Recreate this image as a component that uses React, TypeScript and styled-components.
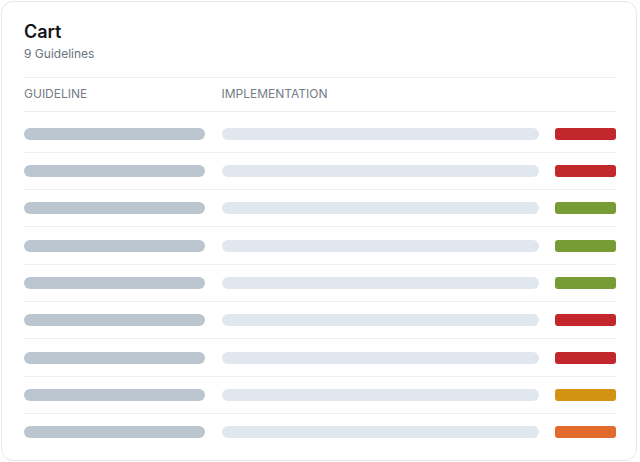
import * as React from 'react';
import styled, {createGlobalStyle} from 'styled-components';

const GlobalStyle = createGlobalStyle`
  html, body {
    margin: 0;
    padding: 0;
    background: #ffffff;
    font-family: Inter, "Noto Sans", "Liberation Sans", sans-serif;
  }
`;

const Page = styled.div`
  padding: 1px;
`;

const Card = styled.div`
  box-sizing: border-box;
  width: 636px;
  height: 460px;
  padding: 17.5px 20px 0 22px;
  border: 1px solid #e3e7ec;
  border-radius: 12px;
  background: #ffffff;
`;

const Title = styled.h1`
  margin: 0;
  font-size: 18px;
  line-height: 24px;
  font-weight: 600;
  color: #111418;
`;

const Subtitle = styled.p`
  margin: 2px 0 15px;
  font-size: 12px;
  line-height: 16px;
  color: #6b7480;
`;

const Grid = styled.div`
  display: grid;
  grid-template-columns: 181px 1fr 61px;
  column-gap: 16.5px;
  align-items: center;
`;

const HeaderRow = styled(Grid)`
  padding: 8.5px 0;
  border-top: 1px solid #eceff2;
  border-bottom: 1px solid #eceff2;
`;

const HeaderCell = styled.span`
  font-size: 12px;
  line-height: 16px;
  color: #747c87;
  text-transform: uppercase;
`;

const Body = styled.div`
  margin-top: 4px;
`;

const Row = styled(Grid)`
  padding: 12.33px 0 12px;
  border-bottom: 1px solid #eef0f3;

  &:last-child {
    border-bottom: none;
  }
`;

const GuidelineBar = styled.div`
  height: 12px;
  border-radius: 6px;
  background: #bcc6d0;
`;

const ImplementationBar = styled.div`
  height: 12px;
  border-radius: 6px;
  background: #e1e7ee;
`;

type Status = 'fail' | 'pass' | 'warn' | 'partial';

const statusColors: Record<Status, string> = {
  fail: '#c1272b',
  pass: '#789c35',
  warn: '#d39212',
  partial: '#e06b2c',
};

const StatusBar = styled.div<{$status: Status}>`
  height: 12px;
  border-radius: 3px;
  background: ${p => statusColors[p.$status]};
`;

const rows: Status[] = ['fail', 'fail', 'pass', 'pass', 'pass', 'fail', 'fail', 'warn', 'partial'];

export default function App() {
  return (
    <Page>
      <GlobalStyle/>
      <Card>
        <Title>Cart</Title>
        <Subtitle>{rows.length} Guidelines</Subtitle>
        <HeaderRow>
          <HeaderCell>Guideline</HeaderCell>
          <HeaderCell>Implementation</HeaderCell>
          <span/>
        </HeaderRow>
        <Body>
          {rows.map((status, i) => (
            <Row key={i}>
              <GuidelineBar/>
              <ImplementationBar/>
              <StatusBar $status={status}/>
            </Row>
          ))}
        </Body>
      </Card>
    </Page>
  );
}
